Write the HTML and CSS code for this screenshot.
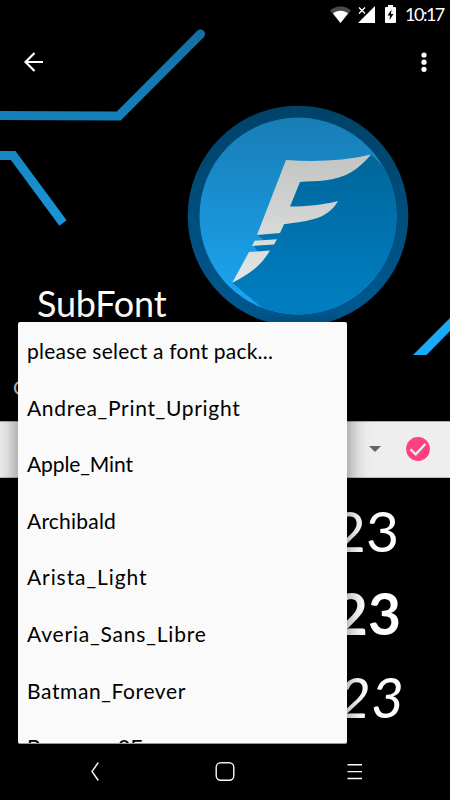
FILE: index.html
```html
<!DOCTYPE html>
<html lang="en">
<head>
    <meta charset="UTF-8">
    <meta name="viewport" content="width=device-width, initial-scale=1.0">
    <title>SubFont</title>
    <link rel="stylesheet" href="styles.css">
</head>
<body>
    <div class="screen">
        <header class="hero">
            <!-- circuit lines and logo -->
            <svg class="artwork" viewBox="0 0 450 355" width="450" height="355">
                <defs>
                    <linearGradient id="line" gradientUnits="userSpaceOnUse" x1="0" y1="30" x2="0" y2="355">
                        <stop offset="0" stop-color="#146fa3"/>
                        <stop offset="0.27" stop-color="#1580ba"/>
                        <stop offset="0.6" stop-color="#1995d8"/>
                        <stop offset="1" stop-color="#1caaf8"/>
                    </linearGradient>
                    <linearGradient id="ring" x1="0" y1="0" x2="0" y2="1">
                        <stop offset="0" stop-color="#004268"/>
                        <stop offset="1" stop-color="#005a92"/>
                    </linearGradient>
                    <linearGradient id="disc" x1="0" y1="0" x2="0" y2="1">
                        <stop offset="0" stop-color="#187db5"/>
                        <stop offset="1" stop-color="#1aa8f5"/>
                    </linearGradient>
                    <linearGradient id="shade" gradientUnits="userSpaceOnUse" x1="0" y1="155" x2="0" y2="315">
                        <stop offset="0" stop-color="#00669b"/>
                        <stop offset="1" stop-color="#0080c4"/>
                    </linearGradient>
                    <linearGradient id="letter" gradientUnits="userSpaceOnUse" x1="0" y1="155" x2="0" y2="283">
                        <stop offset="0" stop-color="#c3c5c3"/>
                        <stop offset="1" stop-color="#e2e6e5"/>
                    </linearGradient>
                    <clipPath id="inside"><circle cx="298" cy="216" r="98.5"/></clipPath>
                </defs>
                <g fill="none" stroke="url(#line)" stroke-width="9">
                    <path d="M0 115.4L118.8 115.9L200.5 34"/>
                    <path d="M0 155.5H13.2L63 223"/>
                </g>
                <circle cx="200.5" cy="34" r="4.5" fill="#146fa3"/>
                <path d="M413 355L450 318V331L426.500 355Z" fill="#1caaf8"/>
                <circle cx="298" cy="216" r="110.300" fill="url(#ring)"/>
                <circle cx="298" cy="216" r="98.500" fill="url(#disc)"/>
                <!-- long shadow of the letter -->
                <path clip-path="url(#inside)" fill="url(#shade)" d="M371 154.500L400 182V320H277L261 307L232.500 283L262 262L268 252H258L254 246L272 242L264 240L257 235L280 220L296 175L345 175Z"/>
                <g fill="url(#letter)">
                    <path d="M286 160C315 162 344 161 371 154.500C359 169 346 178 326 180.300C316 181.500 308 181 300 182L290 206.500C307 206.500 322 205 338 201C333 210 325 216 314 219C303 222 293 223 284 224.300L280 233L257 235Z"/>
                    <path d="M254.500 240.800L277 239.300L274 244.500L252 246Z"/>
                    <path d="M249 252L270 250.500C261 266 249 274 232.300 282.800Z"/>
                </g>
            </svg>

            <div class="status-bar">
                <svg width="21" height="17" viewBox="0 0 21 17">
                    <path d="M0 4.500C6 -1 15 -1 21 4.500L10.500 17Z" fill="#4b4b4b"/>
                    <path d="M3 7.500C7 3.800 14 3.800 18 7.500L10.500 17Z" fill="#fff"/>
                </svg>
                <svg class="signal" width="17" height="17" viewBox="0 0 17 17">
                    <path d="M17 0V17H0Z" fill="#fff"/>
                    <path d="M0 0H8V8H0Z" fill="#000"/>
                    <path d="M1 1.500L7 7.500M7 1.500L1 7.500" stroke="#fff" stroke-width="1.300"/>
                </svg>
                <svg class="battery" width="11" height="18" viewBox="0 0 11 18">
                    <path d="M3 0H8V2H10Q11 2 11 3V17Q11 18 10 18H1Q0 18 0 17V3Q0 2 1 2H3Z" fill="#fff"/>
                    <path d="M6.500 4.500L2.500 10.500H5L4.500 15L8.500 9H6Z" fill="#000"/>
                </svg>
                <span class="clock">10:17</span>
            </div>

            <div class="toolbar">
                <svg width="20" height="20" viewBox="0 0 20 20" fill="none" stroke="#fff" stroke-width="2.200">
                    <path d="M19 10H2M10.500 1L1.500 10L10.500 19"/>
                </svg>
                <svg width="6" height="20" viewBox="0 0 6 20" fill="#fff">
                    <circle cx="3" cy="3" r="2.600"/>
                    <circle cx="3" cy="10.200" r="2.600"/>
                    <circle cx="3" cy="17.300" r="2.600"/>
                </svg>
            </div>
            <h1 class="title">SubFont</h1>
            <p class="subtitle">C</p>
        </header>

        <div class="picker">
            <svg width="12" height="6" viewBox="0 0 12 6"><path d="M0 0H12L6 6Z" fill="#656565"/></svg>
            <svg width="24" height="24" viewBox="0 0 24 24">
                <circle cx="12" cy="12" r="11.900" fill="#ff4081"/>
                <path d="M4.500 12.300L9.700 17.300L19.300 7" fill="none" stroke="#eee" stroke-width="2.300"/>
            </svg>
        </div>

        <main class="preview">
            <p class="sample">123</p>
            <p class="sample bold">123</p>
            <p class="sample italic">123</p>
        </main>

        <nav class="nav-bar">
            <svg width="20" height="20" viewBox="0 0 20 20"><path d="M13.300 1.500L7 10.500L13.300 19.500"/></svg>
            <svg width="20" height="20" viewBox="0 0 20 20"><rect x="1.200" y="1.700" width="17.600" height="17.600" rx="4.500"/></svg>
            <svg width="20" height="20" viewBox="0 0 20 20"><path d="M2.500 3.700H17M2.500 10.600H17M2.500 17.500H17"/></svg>
        </nav>

        <!-- open dropdown -->
        <ul class="dropdown">
            <li class="prompt">please select a font pack...</li>
            <li class="andrea">Andrea_Print_Upright</li>
            <li class="apple">Apple_Mint</li>
            <li class="archibald">Archibald</li>
            <li class="arista">Arista_Light</li>
            <li class="averia">Averia_Sans_Libre</li>
            <li class="batman">Batman_Forever</li>
            <li class="banana">Bananas_0F</li>
        </ul>
    </div>
</body>
</html>
```

FILE: styles.css
```css
* {
    box-sizing: border-box;
}

body {
    margin: 0;
    background: #000;
    color: #fff;
    font-family: Lato, "Open Sans", sans-serif;
}

h1, p, ul {
    margin: 0;
    padding: 0;
    font-weight: normal;
}

svg {
    display: block;
    flex: none;
}

.screen {
    position: relative;
    display: flex;
    flex-direction: column;
    width: 450px;
    height: 800px;
    overflow: hidden;
}

.hero {
    position: relative;
    height: 421px;
}

/* artwork lies behind the bars and the title */
.artwork {
    position: absolute;
    top: 0;
    left: 0;
    z-index: -1;
}

.status-bar {
    display: flex;
    align-items: center;
    justify-content: flex-end;
    height: 28px;
    padding-right: 8px;
}

.signal {
    margin-left: 7px;
}

.battery {
    margin-left: 10px;
}

.clock {
    width: 37px;
    margin-left: 9px;
    font-size: 18px;
    letter-spacing: -1.5px;
    white-space: nowrap;
}

.toolbar {
    display: flex;
    align-items: center;
    justify-content: space-between;
    height: 67px;
    padding: 0 23px 0 24px;
}

.title {
    margin: 186px 0 0 37px;
    font-size: 36px;
    line-height: 44px;
    letter-spacing: -0.2px;
}

.subtitle {
    margin: 50px 0 0 13px;
    color: #ddd;
    font-size: 20px;
    line-height: 24px;
}

.picker {
    display: flex;
    align-items: center;
    justify-content: flex-end;
    gap: 25px;
    height: 57px;
    padding: 0 20px 2px 0;
    background: #eee;
    border-top: 1px solid #aaa;
    border-bottom: 1px solid #bbb;
}

.preview {
    height: 265px;
    padding-top: 11px;
    text-align: right;
}

.sample {
    height: 83px;
    padding-right: 51px;
    font-size: 57px;
    line-height: 83px;
}

.bold {
    padding-right: 49px;
    font-weight: bold;
}

.italic {
    padding-right: 46px;
    font-style: italic;
}

.nav-bar {
    display: flex;
    align-items: center;
    justify-content: space-between;
    height: 57px;
    padding: 0 85px 2px;
    fill: none;
    stroke: #fff;
    stroke-width: 1.4;
}

/* popup list over the page */
.dropdown {
    position: absolute;
    top: 322px;
    left: 18px;
    width: 329px;
    height: 422px;
    overflow: hidden;
    background: #fafafa;
    border-radius: 2px;
    border-bottom: 1px solid #999;
    box-shadow: 0 7px 22px rgba(0, 0, 0, 0.5);
    color: #000;
    list-style: none;
}

.dropdown li {
    height: 56.6px;
    padding-left: 9px;
    font-size: 21px;
    line-height: 57px;
    white-space: nowrap;
}

.dropdown .prompt,
.dropdown .archibald {
    letter-spacing: 0.22px;
}

.dropdown .andrea {
    letter-spacing: 0.7px;
}

.dropdown .apple {
    letter-spacing: -0.1px;
}

.dropdown .arista {
    letter-spacing: 0.92px;
}

.dropdown .averia {
    letter-spacing: 0.82px;
}

.dropdown .batman {
    letter-spacing: 0.6px;
}

.dropdown .banana {
    letter-spacing: 0.5px;
}
```
